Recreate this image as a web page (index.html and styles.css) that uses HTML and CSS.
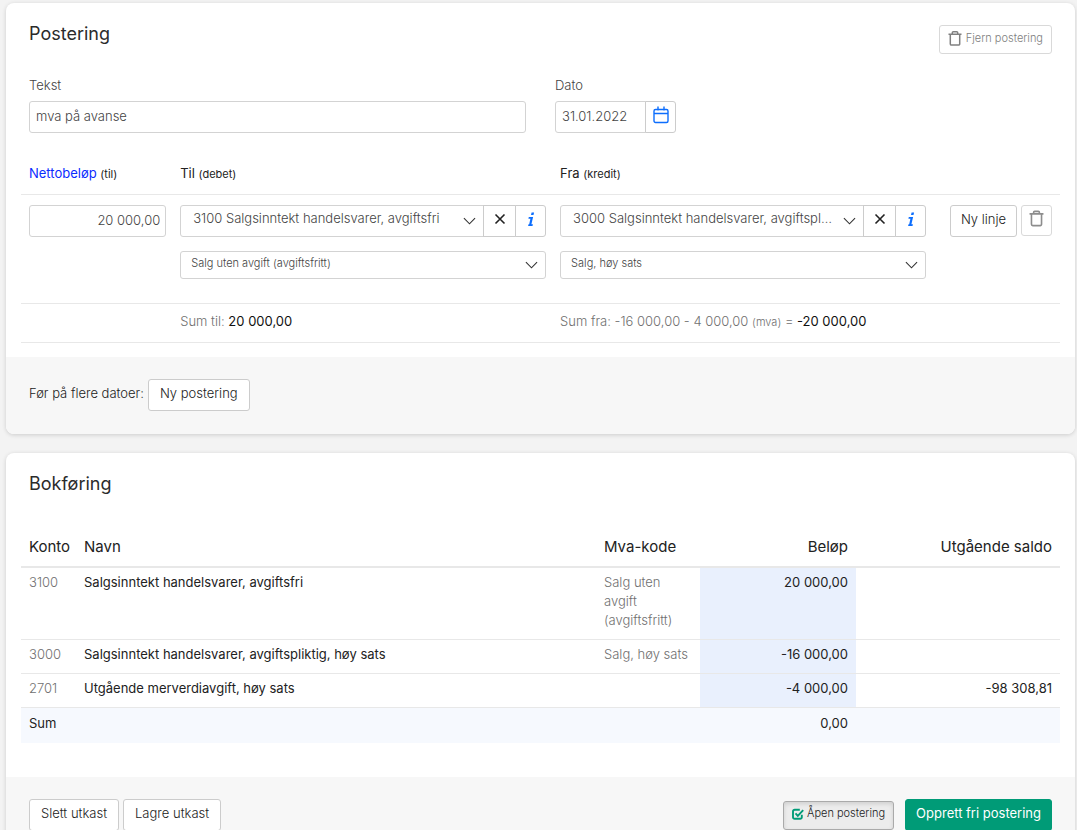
FILE: index.html
```html
<!DOCTYPE html>
<html lang="no">
<head>
<meta charset="utf-8">
<meta name="viewport" content="width=device-width, initial-scale=1">
<title>Fri postering</title>
<link rel="stylesheet" href="styles.css">
</head>
<body>
<svg class="sprite" aria-hidden="true">
  <symbol id="trash" viewBox="0 0 14 15"><path d="M.5 3.200h13M4.300 3V1.800a1 1 0 0 1 1-1h3.400a1 1 0 0 1 1 1V3M2.300 3.500v9.400a1.200 1.200 0 0 0 1.200 1.200h7a1.200 1.200 0 0 0 1.200-1.200V3.500" fill="none" stroke="currentColor" stroke-width="1.500"/></symbol>
  <symbol id="chevron" viewBox="0 0 14 8"><path d="M1 1l6 6 6-6" fill="none" stroke="currentColor" stroke-width="1.200"/></symbol>
  <symbol id="cross" viewBox="0 0 12 12"><path d="M1.500 1.500l9 9M10.500 1.500l-9 9" fill="none" stroke="currentColor" stroke-width="1.600"/></symbol>
  <symbol id="info" viewBox="0 0 8 16"><path d="M4.600 1h2.500l-.6 2.500H4zM1.800 5.400h4.300L4.400 12.700h1.500l-.4 1.800H1.100l.4-1.800h.7L3.400 7.200H1.400z" fill="currentColor"/></symbol>
</svg>

<main class="page">
  <section class="card">
    <div class="card-body">
      <header class="card-head">
        <h2 class="title">Postering</h2>
        <button class="btn btn-small btn-muted" type="button"><svg class="icon-trash"><use href="#trash"/></svg>Fjern postering</button>
      </header>

      <div class="fields">
        <div class="field">
          <label class="label" for="tekst">Tekst</label>
          <input class="input" id="tekst" type="text" value="mva på avanse">
        </div>
        <div class="field">
          <label class="label" for="dato">Dato</label>
          <div class="group group-date">
            <input class="input" id="dato" type="text" value="31.01.2022">
            <button class="btn btn-icon btn-blue" type="button" aria-label="Velg dato">
              <svg class="icon-calendar" viewBox="0 0 16 18"><path d="M2.500 3.500h11a1.500 1.500 0 0 1 1.500 1.500v10a1.500 1.500 0 0 1-1.500 1.500h-11A1.500 1.500 0 0 1 1 15V5a1.500 1.500 0 0 1 1.500-1.500zM1 7.500h14M5 .5v4M11 .5v4" fill="none" stroke="currentColor" stroke-width="1.400"/></svg>
            </button>
          </div>
        </div>
      </div>

      <div class="row row-head">
        <div><a class="link" href="#netto">Nettobeløp</a> <small>(til)</small></div>
        <div>Til <small>(debet)</small></div>
        <div>Fra <small>(kredit)</small></div>
      </div>

      <div class="row row-line">
        <input class="input input-amount" id="netto" type="text" value="20 000,00" aria-label="Nettobeløp">
        <div class="account">
          <div class="group">
            <div class="select">
              <select class="select-box" aria-label="Til konto"><option>3100 Salgsinntekt handelsvarer, avgiftsfri</option></select>
              <svg class="icon-chevron"><use href="#chevron"/></svg>
            </div>
            <button class="btn btn-icon" type="button" aria-label="Fjern konto"><svg class="icon-cross"><use href="#cross"/></svg></button>
            <button class="btn btn-icon btn-blue" type="button" aria-label="Info"><svg class="icon-info"><use href="#info"/></svg></button>
          </div>
          <div class="select select-small">
            <select class="select-box" aria-label="Mva-kode til"><option>Salg uten avgift (avgiftsfritt)</option></select>
            <svg class="icon-chevron"><use href="#chevron"/></svg>
          </div>
        </div>
        <div class="account">
          <div class="group">
            <div class="select">
              <select class="select-box" aria-label="Fra konto"><option>3000 Salgsinntekt handelsvarer, avgiftspliktig, høy sats</option></select>
              <svg class="icon-chevron"><use href="#chevron"/></svg>
            </div>
            <button class="btn btn-icon" type="button" aria-label="Fjern konto"><svg class="icon-cross"><use href="#cross"/></svg></button>
            <button class="btn btn-icon btn-blue" type="button" aria-label="Info"><svg class="icon-info"><use href="#info"/></svg></button>
          </div>
          <div class="select select-small">
            <select class="select-box" aria-label="Mva-kode fra"><option>Salg, høy sats</option></select>
            <svg class="icon-chevron"><use href="#chevron"/></svg>
          </div>
        </div>
        <div class="actions">
          <button class="btn btn-line" type="button">Ny linje</button>
          <button class="btn btn-icon btn-muted btn-delete" type="button" aria-label="Slett linje"><svg class="icon-trash icon-trash-large"><use href="#trash"/></svg></button>
        </div>
      </div>

      <div class="row row-sum">
        <div></div>
        <div>Sum til: <strong>20 000,00</strong></div>
        <div>Sum fra: -16 000,00 - 4 000,00 <small>(mva)</small> = <strong>-20 000,00</strong></div>
      </div>
    </div>
    <footer class="card-foot">
      <span>Før på flere datoer:</span>
      <button class="btn" type="button">Ny postering</button>
    </footer>
  </section>

  <section class="card">
    <div class="card-body card-body-ledger">
      <h2 class="title">Bokføring</h2>
      <table class="ledger">
        <colgroup><col class="col-account"><col><col class="col-code"><col class="col-amount"><col class="col-balance"></colgroup>
        <thead>
          <tr><th>Konto</th><th>Navn</th><th>Mva-kode</th><th class="num">Beløp</th><th class="num">Utgående saldo</th></tr>
        </thead>
        <tbody>
          <tr><td class="soft">3100</td><td>Salgsinntekt handelsvarer, avgiftsfri</td><td class="soft">Salg uten avgift (avgiftsfritt)</td><td class="num mark">20 000,00</td><td></td></tr>
          <tr><td class="soft">3000</td><td>Salgsinntekt handelsvarer, avgiftspliktig, høy sats</td><td class="soft">Salg, høy sats</td><td class="num mark">-16 000,00</td><td></td></tr>
          <tr><td class="soft">2701</td><td>Utgående merverdiavgift, høy sats</td><td></td><td class="num mark">-4 000,00</td><td class="num">-98 308,81</td></tr>
        </tbody>
        <tfoot>
          <tr><td>Sum</td><td></td><td></td><td class="num">0,00</td><td></td></tr>
        </tfoot>
      </table>
    </div>
    <footer class="card-foot">
      <button class="btn" type="button">Slett utkast</button>
      <button class="btn" type="button">Lagre utkast</button>
      <div class="foot-end">
        <button class="btn btn-small btn-pressed" type="button" aria-pressed="true"><svg class="icon-check" viewBox="0 0 12 12"><path d="M9.800 6.800v2.400a1.600 1.600 0 0 1-1.600 1.600H2.600A1.600 1.600 0 0 1 1 9.200V3.400a1.600 1.600 0 0 1 1.600-1.600h5.200M3.500 5.400l2.300 2.400 5.400-5.600" fill="none" stroke="currentColor" stroke-width="1.900"/></svg>Åpen postering</button>
        <button class="btn btn-primary" type="button">Opprett fri postering</button>
      </div>
    </footer>
  </section>
</main>
</body>
</html>
```
FILE: styles.css
```css
* { box-sizing: border-box; }
html { scrollbar-width: none; }
body {
  margin: 0;
  background: #f3f3f3;
  color: #222;
  font: 13px/19px Inter, "Liberation Sans", sans-serif;
}
button, input, select { font: inherit; color: inherit; margin: 0; }
small { font-size: 11px; }
strong { font-weight: 400; color: #111; }

.sprite { position: absolute; width: 0; height: 0; }
.page { padding: 3px 2px 20px 6px; display: flex; flex-direction: column; gap: 19px; }
.card { background: #fff; border-radius: 8px; box-shadow: 0 1px 4px rgba(0, 0, 0, .16); }
.card-body { padding: 19px 15px 14px; }
.card-head { display: flex; justify-content: space-between; align-items: flex-start; padding: 0 8px; }
.title { margin: 0; font-size: 18px; line-height: 24px; font-weight: 400; color: #2b2b2b; }
.card-foot { display: flex; align-items: baseline; gap: 4px; padding: 22px 23px 23px; background: #f7f7f7; border-radius: 0 0 8px 8px; font-weight: 300; }
.foot-end { display: flex; align-items: center; align-self: flex-start; gap: 11px; margin-left: auto; }

.btn {
  display: inline-flex; align-items: center; justify-content: center;
  height: 32px; padding: 0 11px 4px;
  background: #fff; border: 1px solid #ccc; border-radius: 3px;
  font-weight: 300; white-space: nowrap; cursor: pointer;
}
.btn-small { height: 29px; padding: 0 8px 3px; font-size: 11px; gap: 4px; }
.card-head .btn { margin-top: 3px; }
.btn-muted { color: #808080; border-color: #d9d9d9; }
.btn-icon { width: 33px; flex: none; padding: 0 0 4px; color: #222; }
.btn-icon.btn-blue { width: 31px; color: #0d6efd; }
.btn-icon.btn-delete { width: 31px; height: 31px; color: #8d8d8d; }
.btn-line { width: 67px; padding: 0 0 4px; }
.btn-pressed { background: #ececec; border-color: #aaa; box-shadow: inset 0 2px 4px rgba(0, 0, 0, .12); gap: 3px; }
.btn-primary { background: #009b77; border-color: #009b77; color: #fff; font-weight: 400; padding: 0 10px 4px; }

.icon-trash { width: 14px; height: 15px; }
.icon-trash-large { width: 15px; height: 17px; }
.icon-calendar { width: 16px; height: 18px; }
.icon-cross { width: 12px; height: 12px; }
.icon-info { width: 8px; height: 17px; }
.icon-check { width: 12px; height: 12px; color: #009b77; }
.icon-chevron { width: 13px; height: 8px; color: #333; pointer-events: none; }

.fields { display: flex; gap: 29px; padding: 22px 8px 0; }
.field { display: flex; flex-direction: column; gap: 6px; }
.field:first-child { flex: 0 0 497px; }
.label { color: #444; font-weight: 300; }
.input {
  width: 100%; height: 32px; padding: 0 6px 2px;
  border: 1px solid #d3d3d3; border-radius: 3px; background: #fff; color: #444; font-weight: 300;
}
.input-amount { text-align: right; padding-right: 5px; }

.group { display: flex; }
.group > * + * { margin-left: -1px; }
.group > :not(:last-child), .group > :not(:last-child) .select-box { border-top-right-radius: 0; border-bottom-right-radius: 0; }
.group > :not(:first-child) { border-top-left-radius: 0; border-bottom-left-radius: 0; }
.group-date { width: 121px; }

.select { display: grid; flex: 1; min-width: 0; align-items: center; }
.select > * { grid-area: 1 / 1; }
.select-box {
  appearance: none; width: 100%; min-width: 0; height: 32px; padding: 0 28px 5px 12px;
  border: 1px solid #d3d3d3; border-radius: 3px; background: #fff; color: #444; font-weight: 300;
  white-space: nowrap; overflow: hidden; text-overflow: ellipsis;
}
.select .icon-chevron { justify-self: end; margin: 0 8px 0 0; }
.select-small .select-box { height: 28px; padding: 0 28px 3px 10px; font-size: 11px; }

.row { display: grid; grid-template-columns: 3fr 8fr 8fr 112px; column-gap: 14px; padding: 0 8px; border-bottom: 1px solid #e8e8e8; }
.row-head { padding-top: 31px; padding-bottom: 10px; }
.row-line { padding-top: 10px; padding-bottom: 24px; }
.row-sum { padding-top: 8px; padding-bottom: 10px; color: #707070; font-weight: 300; }
.account { display: flex; flex-direction: column; gap: 14px; min-width: 0; }
.actions { display: flex; align-items: flex-start; justify-content: flex-end; gap: 4px; }
.link { color: #0b2cff; text-decoration: none; }

.card-body-ledger { padding-bottom: 34px; }
.card-body-ledger .title { padding: 0 8px; }
.ledger { width: 100%; margin-top: 32px; table-layout: fixed; border-collapse: separate; border-spacing: 0; }
.col-account { width: 55px; }
.col-code { width: 104px; }
.col-amount { width: 156px; }
.col-balance { width: 204px; }
.ledger th { padding: 9px 8px 10px; border-bottom: 2px solid #e8e8e8; text-align: left; font-size: 15px; font-weight: 400; white-space: nowrap; }
.ledger td { padding: 5px 8px 9px; border-bottom: 1px solid #e8e8e8; vertical-align: top; }
.ledger tfoot td { padding: 6px 8px 10px; border-bottom: 0; background: #f6f9fe; }
.ledger .num { text-align: right; }
.ledger .soft { color: #707070; font-weight: 300; }
.ledger .mark { background: #e9f0fd; }
```
